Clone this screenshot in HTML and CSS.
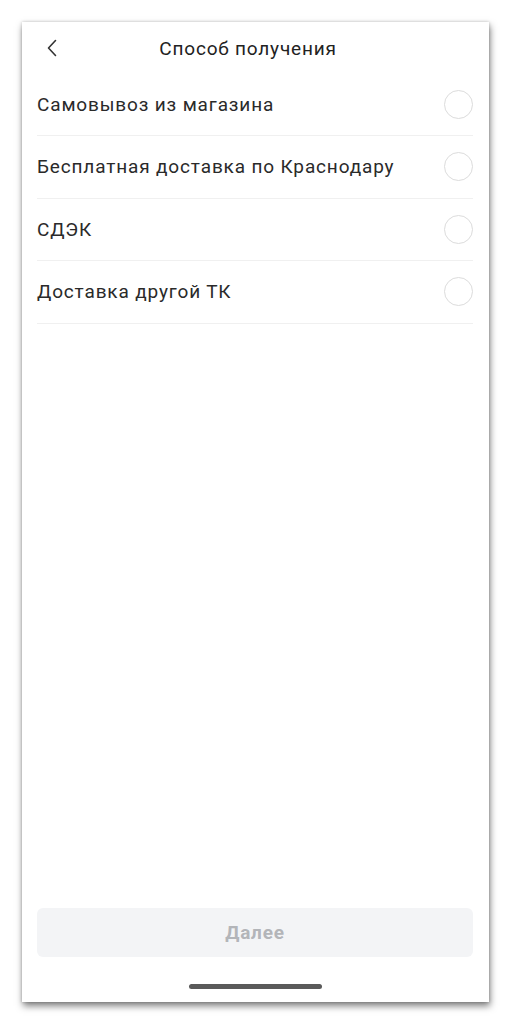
FILE: index.html
```
<!DOCTYPE html>
<html lang="ru">
<head>
<meta charset="utf-8">
<link rel="stylesheet" href="styles.css">
</head>
<body>
<div class="phone">
  <header class="header">
    <span class="back">
      <svg width="12" height="18" viewBox="0 0 12 18"><path d="M9.5 1.5 L2.5 9 L9.5 16.5" fill="none" stroke="#333" stroke-width="1.6" stroke-linecap="round" stroke-linejoin="round"/></svg>
    </span>
    <h1 class="title">Способ получения</h1>
  </header>
  <ul class="options">
    <li class="option"><span class="label">Самовывоз из магазина</span><span class="radio"></span></li>
    <li class="option"><span class="label">Бесплатная доставка по Краснодару</span><span class="radio"></span></li>
    <li class="option"><span class="label">СДЭК</span><span class="radio"></span></li>
    <li class="option"><span class="label">Доставка другой ТК</span><span class="radio"></span></li>
  </ul>
  <div class="spacer"></div>
  <div class="footer">
    <button class="next" type="button">Далее</button>
  </div>
  <div class="home"><span class="home-bar"></span></div>
</div>
</body>
</html>
```
FILE: styles.css
```
html, body {
  margin: 0;
  padding: 0;
  background: #ffffff;
}
body {
  font-family: Roboto, "Noto Sans", "Liberation Sans", sans-serif;
  color: #222;
  padding: 22px 0 22px 22px;
  min-height: 1024px;
  box-sizing: border-box;
}
.phone {
  width: 467px;
  height: 980px;
  background: #fff;
  box-shadow: 1px 4px 7px rgba(0,0,0,0.5), 0 0 3px rgba(0,0,0,0.2);
  display: flex;
  flex-direction: column;
}
.header {
  position: relative;
  height: 51.5px;
  display: flex;
  align-items: center;
  justify-content: center;
}
.back {
  position: absolute;
  left: 24px;
  top: 17px;
  display: flex;
}
.title {
  margin: 0 15px 0 0;
  font-size: 19px;
  letter-spacing: 0.8px;
  font-weight: 400;
  color: #222;
  padding-top: 2px;
}
.options {
  list-style: none;
  margin: 0 16px 0 15px;
  padding: 0;
}
.option {
  height: 61.5px;
  border-bottom: 1px solid #f0f0f0;
  display: flex;
  align-items: center;
  justify-content: space-between;
}
.label {
  font-size: 19px;
  letter-spacing: 0.85px;
  color: #2a2a2a;
}
.radio {
  width: 27px;
  height: 27px;
  border: 1.5px solid #dcdcdc;
  border-radius: 50%;
}
.spacer {
  flex: 1;
}
.footer {
  padding: 0 16px 0 15px;
}
.next {
  width: 100%;
  height: 49px;
  border: none;
  border-radius: 6px;
  background: #f3f4f6;
  color: #b3b5b9;
  font-family: Roboto, "Noto Sans", "Liberation Sans", sans-serif;
  font-size: 19px;
  letter-spacing: 0.8px;
  font-weight: 700;
}
.home {
  height: 45px;
  display: flex;
  justify-content: center;
  padding-top: 27px;
  box-sizing: border-box;
}
.home-bar {
  width: 133px;
  height: 5px;
  border-radius: 3px;
  background: #5a5a5a;
}
```
